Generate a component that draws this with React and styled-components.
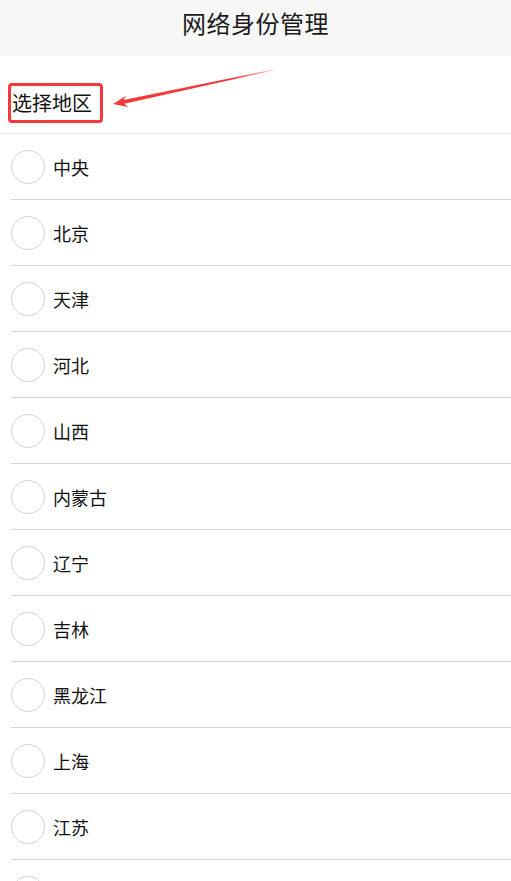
import React from "react";
import styled, { createGlobalStyle } from "styled-components";

const Global = createGlobalStyle`
  html, body { margin: 0; padding: 0; background: #fff; }
  body { font-family: "Noto Sans CJK SC", "Noto Sans", sans-serif; color: #111; }
`;

const Page = styled.div`
  width: 511px;
  height: 881px;
  overflow: hidden;
  background: #fff;
`;

const Header = styled.header`
  height: 56px;
  box-sizing: border-box;
  padding-top: 10px;
  background: #f7f7f7;
  text-align: center;
  font-size: 24px;
  line-height: 26px;
  color: #1a1a1a;
  letter-spacing: 0.5px;
`;

const Section = styled.div`
  position: relative;
  height: 77px;
  box-sizing: content-box;
  border-bottom: 1px solid #e6e6e6;
  display: flex;
  align-items: flex-start;
  padding-left: 8px;
`;

const Label = styled.div`
  margin-top: 27px;
  height: 34px;
  line-height: 34px;
  font-size: 20px;
  color: #111;
  border: 3px solid #f4383b;
  border-radius: 4px;
  padding: 0 8px 0 1px;
`;

const Annotation = styled.svg`
  position: absolute;
  left: 0;
  top: 0;
  width: 511px;
  height: 77px;
  pointer-events: none;
`;

const List = styled.ul`
  list-style: none;
  margin: 0;
  padding: 0 0 0 11px;
`;

const Row = styled.li`
  height: 65px;
  border-bottom: 1px solid #d4d4d4;
  display: flex;
  align-items: center;
  gap: 8px;
`;

const Radio = styled.span`
  width: 32px;
  height: 32px;
  border: 1.5px solid #d4d4d4;
  border-radius: 50%;
  flex: none;
`;

const Name = styled.span`
  font-size: 18px;
  line-height: 20px;
  color: #111;
`;

const regions = [
  "中央", "北京", "天津", "河北", "山西", "内蒙古", "辽宁", "吉林",
  "黑龙江", "上海", "江苏", "浙江",
];

export default function App() {
  return (
    <Page>
      <Global />
      <Header>网络身份管理</Header>
      <Section>
        <Label>选择地区</Label>
        <Annotation viewBox="0 0 511 77">
          <defs>
            <linearGradient id="fade" x1="113" y1="0" x2="275" y2="0" gradientUnits="userSpaceOnUse">
              <stop offset="0" stopColor="#f4383b" stopOpacity="1" />
              <stop offset="0.75" stopColor="#f4383b" stopOpacity="1" />
              <stop offset="1" stopColor="#f4383b" stopOpacity="0.2" />
            </linearGradient>
          </defs>
          <g transform="translate(0,-56)">
            <polygon
              fill="url(#fade)"
              points="113,104 126,96 123.6,100 273,69.4 273.3,70.4 124.3,103.8 128,107"
            />
          </g>
        </Annotation>
      </Section>
      <List>
        {regions.map((r) => (
          <Row key={r}>
            <Radio />
            <Name>{r}</Name>
          </Row>
        ))}
      </List>
    </Page>
  );
}
